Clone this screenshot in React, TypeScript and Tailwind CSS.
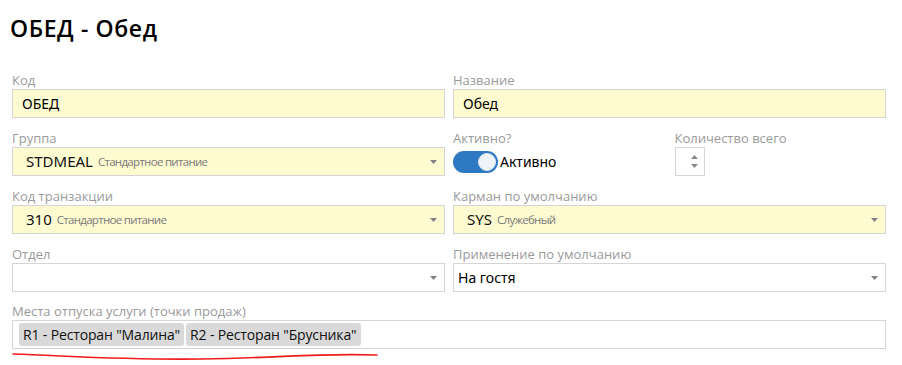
import React from "react";

const label = "block h-[17px] text-[13px] leading-[17px] text-[#9a9a9a] font-['Open_Sans',sans-serif]";
const boxBase = "flex h-[29px] w-full items-center border border-[#d5d5d5] px-2 font-['Noto_Sans',sans-serif] text-[14px] text-black";

function Caret() {
  return (
    <svg width="7" height="4" viewBox="0 0 7 4" className="ml-auto shrink-0">
      <path d="M0 0 L7 0 L3.5 4 Z" fill="#808080" />
    </svg>
  );
}

function Field({ title, children }: { title: string; children: React.ReactNode }) {
  return (
    <div className="mb-3">
      <span className={label}>{title}</span>
      {children}
    </div>
  );
}

function Select({ code, desc, yellow = true }: { code?: string; desc?: string; yellow?: boolean }) {
  return (
    <div className={`${boxBase} pl-[13px] pr-[7px] ${yellow ? "bg-[#fffbd1]" : "bg-white"}`}>
      {code && <span className="text-[15px] text-[#111]">{code}</span>}
      {desc && (
        <span className="ml-[5px] font-['Open_Sans',sans-serif] text-[11.5px] tracking-[-0.7px] text-[#7a7a7a]">
          {desc}
        </span>
      )}
      <Caret />
    </div>
  );
}

export default function App(): React.JSX.Element {
  return (
    <div className="w-[902px] h-[365px] bg-white overflow-hidden">
      <h1 className="pl-[10px] pt-[13px] h-[72px] text-[23px] leading-[30px] font-semibold tracking-[0.6px] text-black font-['Open_Sans',sans-serif]">
        ОБЕД - Обед
      </h1>

      <div className="ml-[12px] w-[874px] grid grid-cols-2 gap-x-2">
        <Field title="Код">
          <div className={`${boxBase} pl-[9px] bg-[#fffbd1]`}>ОБЕД</div>
        </Field>
        <Field title="Название">
          <div className={`${boxBase} pl-[9px] bg-[#fffbd1]`}>Обед</div>
        </Field>

        <Field title="Группа">
          <Select code="STDMEAL" desc="Стандартное питание" />
        </Field>
        <div className="grid grid-cols-2 gap-x-2 mb-3">
          <div>
            <span className={label}>Активно?</span>
            <div className="flex items-center h-[29px]">
              <div className="flex h-[22px] w-[45px] items-center justify-end rounded-full bg-[#2f78c2] pr-[2px]">
                <div className="h-[18px] w-[18px] rounded-full bg-[#eef3fa] border border-[#dfe7f2]" />
              </div>
              <span className="ml-[2px] font-['Noto_Sans',sans-serif] text-[14px] text-black">Активно</span>
            </div>
          </div>
          <div className="pl-[1px]">
            <span className={label}>Количество всего</span>
            <div className="flex h-[29px] w-[30px] flex-col items-end justify-center gap-[5px] border border-[#d5d5d5] pr-[6px]">
              <svg width="7" height="4" viewBox="0 0 7 4"><path d="M3.5 0 L7 4 L0 4 Z" fill="#8a8a8a" /></svg>
              <svg width="7" height="4" viewBox="0 0 7 4"><path d="M0 0 L7 0 L3.5 4 Z" fill="#8a8a8a" /></svg>
            </div>
          </div>
        </div>

        <Field title="Код транзакции">
          <Select code="310" desc="Стандартное питание" />
        </Field>
        <Field title="Карман по умолчанию">
          <Select code="SYS" desc="Служебный" />
        </Field>

        <Field title="Отдел">
          <Select yellow={false} />
        </Field>
        <Field title="Применение по умолчанию">
          <div className={`${boxBase} bg-white pr-[7px] pl-[4px]`}>
            <span>На гостя</span>
            <Caret />
          </div>
        </Field>

        <div className="col-span-2 relative -mt-[1px]">
          <span className={label}>Места отпуска услуги (точки продаж)</span>
          <div className="flex h-[29px] w-full items-center gap-[2px] border border-[#d5d5d5] bg-white px-[6px] font-['Open_Sans',sans-serif] text-[14px] tracking-[-0.15px] text-[#111]">
            <span className="flex h-[23px] items-center rounded-[3px] bg-[#d9d9d9] px-[4px]">R1 - Ресторан "Малина"</span>
            <span className="flex h-[23px] items-center rounded-[3px] bg-[#d9d9d9] px-[4px]">R2 - Ресторан "Брусника"</span>
          </div>
          <svg width="370" height="12" viewBox="0 0 370 12" className="absolute left-0 top-[48px]">
            <path d="M1 3 C 60 5, 110 9, 190 8 S 300 2, 365 4" fill="none" stroke="#f21c1c" strokeWidth="1.6" strokeLinecap="round" />
          </svg>
        </div>
      </div>
    </div>
  );
}
